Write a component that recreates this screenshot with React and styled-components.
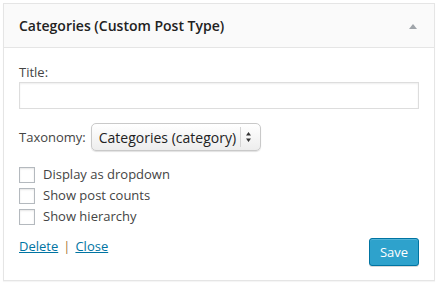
import styled, { createGlobalStyle } from 'styled-components';

const Global = createGlobalStyle`
  body {
    margin: 0;
    background: #fff;
    font-family: "Open Sans", "Liberation Sans", sans-serif;
    font-size: 13px;
    color: #444;
  }
`;

const Widget = styled.div`
  box-sizing: border-box;
  width: 432px;
  margin: 3px;
  border: 1px solid #e5e5e5;
  box-shadow: 0 1px 1px rgba(0, 0, 0, 0.04);
  background: #fff;
`;

const Header = styled.div`
  height: 43px;
  display: flex;
  align-items: center;
  justify-content: space-between;
  padding: 0 17px 0 15px;
  background: #fafafa;
  border-bottom: 1px solid #e5e5e5;
`;

const HeaderTitle = styled.h3`
  margin: 0;
  font-size: 14px;
  font-weight: 600;
  color: #222;
`;

const Toggle = styled.span`
  width: 0;
  height: 0;
  border-left: 4px solid transparent;
  border-right: 4px solid transparent;
  border-bottom: 5px solid #a0a5aa;
  margin-top: 2px;
`;

const Body = styled.div`
  padding: 15px 15px 14px;
`;

const Label = styled.label`
  display: block;
  line-height: 18px;
`;

const TextInput = styled.input`
  display: block;
  box-sizing: border-box;
  width: 100%;
  height: 27px;
  margin: 1px 0 0;
  border: 1px solid #ddd;
  box-shadow: inset 0 1px 2px rgba(0, 0, 0, 0.07);
  font: inherit;
  outline: none;
`;

const Row = styled.div`
  display: flex;
  align-items: center;
  gap: 5px;
  margin-top: ${({ $top }) => $top}px;
`;

const Select = styled.div`
  display: flex;
  align-items: center;
  box-sizing: border-box;
  height: 28px;
  padding: 0 9px 0 7px;
  border: 1px solid #c9c9c9;
  border-radius: 5px;
  background: linear-gradient(#fff, #ededed);
  box-shadow: 0 1px 1px rgba(0, 0, 0, 0.12);
  font-size: 14px;
  color: #222;
`;

const SelectDivider = styled.span`
  align-self: stretch;
  width: 1px;
  margin: 3px 5px 3px 4px;
  background: #d4d4d4;
`;

const Checks = styled.div`
  display: flex;
  flex-direction: column;
  gap: 4px;
  margin-top: 15px;
`;

const CheckRow = styled.label`
  display: flex;
  align-items: center;
  gap: 8px;
  line-height: 17px;
`;

const Box = styled.span`
  box-sizing: border-box;
  width: 16px;
  height: 16px;
  border: 1px solid #b4b9be;
  background: #fff;
  box-shadow: inset 0 1px 2px rgba(0, 0, 0, 0.1);
`;

const Footer = styled.div`
  display: flex;
  justify-content: space-between;
  align-items: flex-start;
  margin-top: 12px;
`;

const Links = styled.div`
  line-height: 18px;
`;

const Link = styled.a`
  color: #0074a2;
  text-decoration: underline;
`;

const Sep = styled.span`
  color: #a87838;
  margin: 0 5px;
`;

const SaveButton = styled.button`
  box-sizing: border-box;
  width: 50px;
  height: 28px;
  margin-top: 1px;
  border: 1px solid #0074a2;
  border-radius: 3px;
  background: #2ea2cc;
  box-shadow: inset 0 1px 0 rgba(120, 200, 230, 0.5), 0 1px 0 rgba(0, 0, 0, 0.15);
  color: #fff;
  font: inherit;
  font-size: 13px;
`;

const options = ['Display as dropdown', 'Show post counts', 'Show hierarchy'];

export default function App() {
  return (
    <>
      <Global />
      <Widget>
        <Header>
          <HeaderTitle>Categories (Custom Post Type)</HeaderTitle>
          <Toggle />
        </Header>
        <Body>
          <Label>Title:</Label>
          <TextInput type="text" />
          <Row $top={14}>
            <span>Taxonomy:</span>
            <Select>
              Categories (category)
              <SelectDivider />
              <svg width="5" height="10" viewBox="0 0 5 10">
                <path d="M2.5 0 L5 3.5 H0 Z M0 6.5 H5 L2.5 10 Z" fill="#333" />
              </svg>
            </Select>
          </Row>
          <Checks>
            {options.map((o) => (
              <CheckRow key={o}>
                <Box />
                {o}
              </CheckRow>
            ))}
          </Checks>
          <Footer>
            <Links>
              <Link href="#">Delete</Link>
              <Sep>|</Sep>
              <Link href="#">Close</Link>
            </Links>
            <SaveButton>Save</SaveButton>
          </Footer>
        </Body>
      </Widget>
    </>
  );
}
